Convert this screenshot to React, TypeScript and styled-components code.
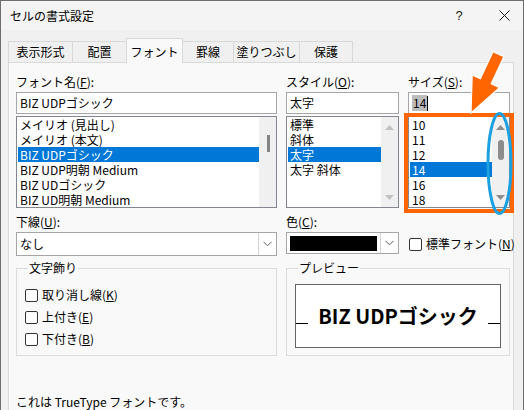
import React from 'react';
import styled, { createGlobalStyle } from 'styled-components';

const GlobalStyle = createGlobalStyle`
  html, body {
    margin: 0;
    padding: 0;
    background: #ffffff;
  }
  body {
    font-family: "Noto Sans CJK JP", sans-serif;
    font-size: 12px;
    color: #000;
  }
`;

const fontNames = [
  'メイリオ (見出し)',
  'メイリオ (本文)',
  'BIZ UDPゴシック',
  'BIZ UDP明朝 Medium',
  'BIZ UDゴシック',
  'BIZ UD明朝 Medium',
];
const styles = ['標準', '斜体', '太字', '太字 斜体'];
const sizes = ['10', '11', '12', '14', '16', '18'];
const tabs = [
  { label: '表示形式', w: 65 },
  { label: '配置', w: 55 },
  { label: 'フォント', w: 57 },
  { label: '罫線', w: 52 },
  { label: '塗りつぶし', w: 67 },
  { label: '保護', w: 54 },
];

const Chevron = () => (
  <svg width="9" height="6" viewBox="0 0 9 6">
    <polyline points="0.5,0.8 4.5,4.8 8.5,0.8" fill="none" stroke="#606060" strokeWidth="1" />
  </svg>
);

const Arrow = ({ up, color }: { up?: boolean; color: string }) => (
  <svg width="9" height="5" viewBox="0 0 9 5">
    <polygon points={up ? '0,5 4.5,0 9,5' : '0,0 4.5,5 9,0'} fill={color} />
  </svg>
);

const Check = ({ text, keyChar }: { text: string; keyChar: string }) => (
  <CheckRow>
    <Box />
    <span>
      {text}(<u>{keyChar}</u>)
    </span>
  </CheckRow>
);

const App = () => {
  return (
    <>
      <GlobalStyle />
      <Window>
        <TitleBar>
          <Title>セルの書式設定</Title>
          <HelpButton>?</HelpButton>
          <CloseButton>
            <svg width="11" height="11" viewBox="0 0 11 11">
              <path d="M0.5 0.5 L10.5 10.5 M10.5 0.5 L0.5 10.5" stroke="#1a1a1a" strokeWidth="1" />
            </svg>
          </CloseButton>
        </TitleBar>

        <TabStrip>
          {tabs.map((t) => (
            <Tab key={t.label} $w={t.w} $active={t.label === 'フォント'}>
              {t.label}
            </Tab>
          ))}
        </TabStrip>

        <Panel>
          <TopGrid>
            <Field>
              <Label>
                フォント名(<u>F</u>):
              </Label>
              <TextBox>BIZ UDPゴシック</TextBox>
              <ListBox>
                <Items>
                  {fontNames.map((f) => (
                    <Item key={f} $selected={f === 'BIZ UDPゴシック'}>
                      {f}
                    </Item>
                  ))}
                </Items>
                <ScrollBar>
                  <ThinThumb />
                </ScrollBar>
              </ListBox>
            </Field>

            <Field>
              <Label>
                スタイル(<u>O</u>):
              </Label>
              <TextBox>太字</TextBox>
              <ListBox>
                <Items>
                  {styles.map((s) => (
                    <Item key={s} $selected={s === '太字'}>
                      {s}
                    </Item>
                  ))}
                </Items>
                <ScrollBar $arrows>
                  <Arrow up color="#c2c2c2" />
                  <Arrow color="#c2c2c2" />
                </ScrollBar>
              </ListBox>
            </Field>

            <Field>
              <Label>
                サイズ(<u>S</u>):
              </Label>
              <TextBox>
                <SelText>14</SelText>
                <Caret />
              </TextBox>
              <ListBox>
                <Items>
                  {sizes.map((s) => (
                    <Item key={s} $selected={s === '14'}>
                      {s}
                    </Item>
                  ))}
                </Items>
                <ScrollBar $arrows>
                  <Arrow up color="#8c8c8c" />
                  <PillThumb />
                  <Arrow color="#8c8c8c" />
                </ScrollBar>
              </ListBox>
            </Field>

            <Field>
              <Label>
                下線(<u>U</u>):
              </Label>
              <Select $h={24}>
                <SelectValue>なし</SelectValue>
                <DropButton>
                  <Chevron />
                </DropButton>
              </Select>
            </Field>

            <Field>
              <Label>
                色(<u>C</u>):
              </Label>
              <Select $h={22}>
                <Swatch />
                <DropButton>
                  <Chevron />
                </DropButton>
              </Select>
            </Field>

            <CheckField>
              <Check text="標準フォント" keyChar="N" />
            </CheckField>
          </TopGrid>

          <GroupGrid>
            <Group>
              <Legend>文字飾り</Legend>
              <CheckList>
                <Check text="取り消し線" keyChar="K" />
                <Check text="上付き" keyChar="E" />
                <Check text="下付き" keyChar="B" />
              </CheckList>
            </Group>

            <Group $preview>
              <Legend>プレビュー</Legend>
              <PreviewBox>
                <BaseLine />
                <PreviewText>BIZ UDPゴシック</PreviewText>
                <BaseLine />
              </PreviewBox>
            </Group>
          </GroupGrid>

          <Note>これは TrueType フォントです。</Note>
        </Panel>

        <Annotation width="524" height="410" viewBox="0 0 524 410">
          <rect x="406" y="115" width="106" height="96" fill="none" stroke="#ff6600" strokeWidth="4" />
          <ellipse cx="499.5" cy="163.5" rx="11.5" ry="50" fill="none" stroke="#1ba1e2" strokeWidth="3" />
          <polygon
            points="493.1,51.6 503.9,56.6 491.2,83.8 499.4,87.6 471,113 472.2,75 480.4,78.8"
            fill="#ff6600"
            stroke="#ffffff"
            strokeWidth="1.2"
            strokeLinejoin="miter"
          />
        </Annotation>
      </Window>
    </>
  );
};

const Window = styled.div`
  position: relative;
  width: 524px;
  height: 410px;
  box-sizing: border-box;
  border: 1px solid #6e6e6e;
  border-bottom: none;
  background: #f0f0f0;
  display: flex;
  flex-direction: column;
  overflow: hidden;
`;

const TitleBar = styled.div`
  height: 29px;
  display: flex;
  align-items: center;
  padding-left: 9px;
  background: #f4f4f4;
`;

const Title = styled.span`
  font-size: 12px;
  line-height: 16px;
`;

const HelpButton = styled.span`
  margin-left: auto;
  width: 52px;
  text-align: center;
  font-family: "Liberation Sans", sans-serif;
  font-size: 13px;
  color: #1a1a1a;
`;

const CloseButton = styled.span`
  width: 38px;
  display: flex;
  justify-content: center;
  align-items: center;
`;

const TabStrip = styled.div`
  height: 24px;
  margin-top: 8px;
  padding-left: 7px;
  display: flex;
  align-items: flex-end;
  position: relative;
  z-index: 1;
`;

const Tab = styled.div<{ $w: number; $active?: boolean }>`
  width: ${(p) => p.$w}px;
  height: ${(p) => (p.$active ? 25 : 21)}px;
  box-sizing: border-box;
  margin-right: -1px;
  margin-bottom: ${(p) => (p.$active ? -1 : 0)}px;
  border: 1px solid #d9d9d9;
  border-bottom: none;
  background: ${(p) => (p.$active ? '#f9f9f9' : '#f0f0f0')};
  position: relative;
  z-index: ${(p) => (p.$active ? 2 : 0)};
  text-align: center;
  font-size: 12px;
  line-height: ${(p) => (p.$active ? 25 : 20)}px;
`;

const Panel = styled.div`
  flex: 1;
  margin: 0 9px 0 7px;
  border: 1px solid #d9d9d9;
  border-bottom: none;
  background: #f9f9f9;
  padding: 11px 3px 0 7px;
`;

const TopGrid = styled.div`
  display: grid;
  grid-template-columns: 261px 113px 102px;
  column-gap: 9px;
  row-gap: 6px;
`;

const Field = styled.div`
  display: flex;
  flex-direction: column;
`;

const Label = styled.div`
  height: 16px;
  line-height: 16px;
  margin-bottom: 2px;
`;

const TextBox = styled.div`
  height: 22px;
  box-sizing: border-box;
  border: 1px solid #a6a6a6;
  background: #fff;
  padding-left: 3px;
  display: flex;
  align-items: center;
  line-height: 16px;
`;

const SelText = styled.span`
  background: #bdbdbd;
  padding: 0 1px;
`;

const Caret = styled.span`
  width: 1px;
  height: 15px;
  background: #000;
`;

const ListBox = styled.div`
  margin-top: 2px;
  height: 92px;
  box-sizing: border-box;
  border: 1px solid #82878f;
  background: #fff;
  display: flex;
`;

const Items = styled.div`
  flex: 1;
  padding-left: 1px;
  overflow: hidden;
`;

const Item = styled.div<{ $selected?: boolean }>`
  height: 15px;
  line-height: 15px;
  padding-left: 2px;
  white-space: nowrap;
  overflow: hidden;
  background: ${(p) => (p.$selected ? '#0078d7' : 'transparent')};
  color: ${(p) => (p.$selected ? '#fff' : '#000')};
`;

const ScrollBar = styled.div<{ $arrows?: boolean }>`
  width: 17px;
  background: #f0f0f0;
  display: flex;
  flex-direction: column;
  align-items: center;
  justify-content: ${(p) => (p.$arrows ? 'space-between' : 'flex-start')};
  padding: ${(p) => (p.$arrows ? '8px 0 7px' : '0')};
  box-sizing: border-box;
`;

const ThinThumb = styled.div`
  width: 3px;
  height: 17px;
  margin-top: 18px;
  margin-left: 1px;
  background: #858585;
`;

const PillThumb = styled.div`
  width: 6px;
  height: 20px;
  border-radius: 3px;
  background: #8c8c8c;
  margin-top: -26px;
`;

const Select = styled.div<{ $h: number }>`
  height: ${(p) => p.$h}px;
  box-sizing: border-box;
  border: 1px solid #a6a6a6;
  background: #fff;
  display: flex;
  align-items: stretch;
`;

const SelectValue = styled.div`
  flex: 1;
  padding-left: 3px;
  line-height: 22px;
`;

const Swatch = styled.div`
  flex: 1;
  margin: 3px 3px 2px 3px;
  background: #000;
`;

const DropButton = styled.div`
  width: 17px;
  border-left: 1px solid #d4d4d4;
  display: flex;
  align-items: center;
  justify-content: center;
`;

const CheckField = styled.div`
  align-self: end;
  height: 24px;
  display: flex;
  align-items: center;
  padding-left: 1px;
`;

const CheckRow = styled.div`
  display: flex;
  align-items: center;
  gap: 4px;
  height: 16px;
  line-height: 16px;
  white-space: nowrap;
`;

const Box = styled.span`
  width: 13px;
  height: 13px;
  box-sizing: border-box;
  border: 1px solid #333;
  border-radius: 2px;
  background: #fff;
  flex: none;
`;

const GroupGrid = styled.div`
  margin-top: 4px;
  display: grid;
  grid-template-columns: 261px 224px;
  column-gap: 9px;
`;

const Group = styled.fieldset<{ $preview?: boolean }>`
  margin: 0;
  height: 96px;
  box-sizing: border-box;
  border: 1px solid #dcdcdc;
  padding: ${(p) => (p.$preview ? '8px 8px 0 8px' : '11px 0 0 8px')};
  min-width: 0;
`;

const Legend = styled.legend`
  padding: 0 1px;
  margin-left: 3px;
  line-height: 16px;
  height: 16px;
`;

const CheckList = styled.div`
  display: flex;
  flex-direction: column;
  gap: 6px;
`;

const PreviewBox = styled.div`
  height: 64px;
  box-sizing: border-box;
  border: 1px solid #646464;
  background: #fff;
  display: flex;
  align-items: center;
  justify-content: space-between;
`;

const BaseLine = styled.span`
  width: 12px;
  height: 1px;
  background: #000;
  margin-top: 14px;
`;

const PreviewText = styled.span`
  font-size: 20px;
  font-weight: 700;
  line-height: 28px;
  white-space: nowrap;
`;

const Note = styled.div`
  margin-top: 38px;
  line-height: 16px;
`;

const Annotation = styled.svg`
  position: absolute;
  left: -1px;
  top: -1px;
  pointer-events: none;
  z-index: 5;
`;

export default App;
